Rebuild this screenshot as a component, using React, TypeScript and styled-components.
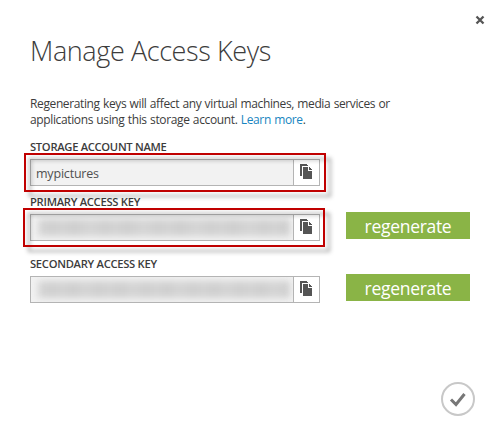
import React from "react";
import styled, { createGlobalStyle } from "styled-components";

const GlobalStyle = createGlobalStyle`
  * { box-sizing: border-box; }
  body {
    margin: 0;
    background: #fff;
    color: #3c3c3c;
    font-family: "Open Sans", "Noto Sans", sans-serif;
  }
`;

const Dialog = styled.main`
  position: relative;
  width: 500px;
  height: 441px;
  padding: 32px 30px 0;
  background: #fff;
  overflow: hidden;
`;

const CloseButton = styled.button`
  position: absolute;
  top: 15px;
  right: 15px;
  width: 10px;
  height: 10px;
  padding: 0;
  border: 0;
  background: none;
  svg { display: block; }
`;

const Title = styled.h1`
  margin: 0;
  height: 38px;
  font-size: 27px;
  line-height: 38px;
  font-weight: 300;
  letter-spacing: -0.4px;
  white-space: nowrap;
`;

const Description = styled.p`
  margin: 26px 0 0;
  font-size: 12px;
  line-height: 16px;
  word-spacing: 0.6px;
  white-space: nowrap;
`;

const Line = styled.span<{ $tracking: number }>`
  display: block;
  letter-spacing: ${(p) => p.$tracking}px;
`;

const Link = styled.a`
  color: #1785c0;
  text-decoration: none;
`;

const Fields = styled.div`
  margin-top: 8px;
`;

const Field = styled.section<{ $height: number }>`
  height: ${(p) => p.$height}px;
`;

const Label = styled.label<{ $tracking: number }>`
  display: block;
  height: 23px;
  padding-top: 4px;
  font-size: 11.2px;
  font-weight: 600;
  line-height: 14px;
  letter-spacing: ${(p) => p.$tracking}px;
  white-space: nowrap;
`;

const Row = styled.div`
  display: flex;
  gap: 26px;
`;

const InputGroup = styled.div`
  position: relative;
  display: flex;
  width: 290px;
  height: 27px;
  border: 1px solid #b4b4b4;
`;

const Value = styled.div`
  flex: 1;
  height: 25px;
  padding-left: 5px;
  background: #f2f2f2;
  color: #505050;
  font-size: 12.5px;
  line-height: 28px;
  letter-spacing: -0.2px;
  overflow: hidden;
`;

const HiddenKey = styled.div<{ $period: number }>`
  width: 252px;
  height: 17px;
  margin: 4px 0 0 2px;
  filter: blur(3.5px);
  background: repeating-linear-gradient(
    90deg,
    #d5d5d5 0,
    #cfcfcf 14px,
    #d3d3d3 25px,
    #cecece 36px,
    #d5d5d5 ${(p) => p.$period}px
  );
`;

const CopyButton = styled.button`
  display: flex;
  align-items: flex-start;
  width: 26px;
  height: 25px;
  padding: 4px 0 0 6px;
  border: 0;
  border-left: 1px solid #b4b4b4;
  background: #fff;
  svg { display: block; flex: none; }
`;

const Highlight = styled.div<{ $left: number }>`
  position: absolute;
  top: -7px;
  left: ${(p) => p.$left}px;
  width: 302px;
  height: 39px;
  border: 2px solid #c00000;
  filter: drop-shadow(5px 5px 2px rgba(0, 0, 0, 0.36));
  pointer-events: none;
`;

const Regenerate = styled.button`
  width: 124px;
  height: 27px;
  margin-top: -2px;
  padding: 2px 0 0;
  border: 0;
  background: #8ab446;
  color: #fff;
  font: 400 17.5px/25px "Open Sans", sans-serif;
  letter-spacing: -0.3px;
`;

const ConfirmButton = styled.button`
  position: absolute;
  right: 25px;
  bottom: 25px;
  width: 34px;
  height: 34px;
  padding: 0;
  border: 0;
  background: none;
  svg { display: block; }
`;

const CopyIcon = () => (
  <svg width="12" height="15" viewBox="0 0 12 15" fill="#555" shapeRendering="crispEdges">
    <path d="M0 0H7V1H8V2H2V12H0Z" />
    <path d="M3 3H8V7H12V15H3Z" />
    <path d="M9 3H10V4H11V5H12V6H9Z" />
  </svg>
);

type AccountField = {
  label: string;
  tracking: number;
  height: number;
  value?: string;
  period?: number;
  highlight?: number;
};

const fields: AccountField[] = [
  { label: "STORAGE ACCOUNT NAME", tracking: -0.3, height: 55, value: "mypictures", highlight: -7 },
  { label: "PRIMARY ACCESS KEY", tracking: -0.27, height: 62, period: 53, highlight: -8 },
  { label: "SECONDARY ACCESS KEY", tracking: -0.28, height: 55, period: 47 },
];

export default function App() {
  return (
    <>
      <GlobalStyle />
      <Dialog>
        <CloseButton aria-label="Close">
          <svg width="10" height="10" viewBox="0 0 10 10" stroke="#555" strokeWidth="2.3">
            <path d="M1.5 1.5 8.5 8.5M8.5 1.5 1.5 8.5" />
          </svg>
        </CloseButton>
        <Title>Manage Access Keys</Title>
        <Description>
          <Line $tracking={-0.38}>Regenerating keys will affect any virtual machines, media services or</Line>
          <Line $tracking={-0.37}>
            applications using this storage account. <Link>Learn more</Link>.
          </Line>
        </Description>
        <Fields>
          {fields.map((f) => (
            <Field key={f.label} $height={f.height}>
              <Label $tracking={f.tracking}>{f.label}</Label>
              <Row>
                <InputGroup>
                  <Value>{f.value ?? <HiddenKey $period={f.period ?? 50} />}</Value>
                  <CopyButton aria-label="Copy"><CopyIcon /></CopyButton>
                  {f.highlight !== undefined && <Highlight $left={f.highlight} />}
                </InputGroup>
                {!f.value && <Regenerate>regenerate</Regenerate>}
              </Row>
            </Field>
          ))}
        </Fields>
        <ConfirmButton aria-label="Confirm">
          <svg width="34" height="34" viewBox="0 0 34 34" fill="none">
            <circle cx="17" cy="17" r="16" stroke="#c8c8c8" strokeWidth="2" />
            <path d="M10 17.5 15 22.5 23.5 12" stroke="#777" strokeWidth="3" />
          </svg>
        </ConfirmButton>
      </Dialog>
    </>
  );
}
